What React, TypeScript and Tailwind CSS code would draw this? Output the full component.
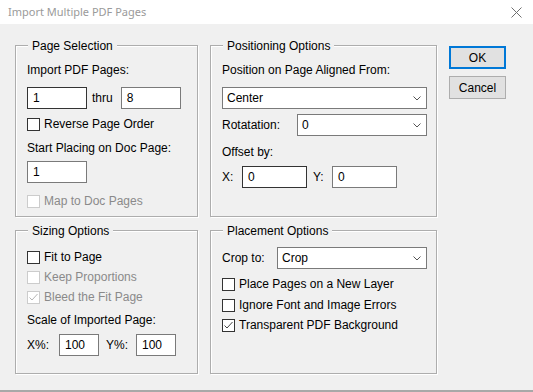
import React from "react";

const font = { fontFamily: '"Liberation Sans", Arial, sans-serif' };

function Group({ title, className, children }: { title: string; className: string; children: React.ReactNode }) {
  return (
    <div className={"relative border border-[#adadad] shadow-[inset_1px_1px_0_#ffffff,1px_1px_0_#ffffff] pl-[11px] pr-[9px] " + className}>
      <span className="absolute left-[12px] top-[-7px] bg-[#f0f0f0] px-[4px] leading-[14px] text-[12px] text-black">{title}</span>
      {children}
    </div>
  );
}

function Input({ value, w, dark }: { value: string; w: string; dark?: boolean }) {
  return (
    <div className={"h-[22px] bg-white border flex items-center pl-[5px] text-[12px] text-black " + w + (dark ? " border-[#333333]" : " border-[#7a7a7a]")}>
      {value}
    </div>
  );
}

function Select({ value, w }: { value: string; w: string }) {
  return (
    <div className={"h-[22px] bg-white border border-[#7a7a7a] flex items-center justify-between pl-[4px] pr-[4px] text-[12px] text-black " + w}>
      <span>{value}</span>
      <svg width="8" height="5" viewBox="0 0 8 5" className="mr-[1px]">
        <path d="M0.5 0.5 L4 4 L7.5 0.5" fill="none" stroke="#555" strokeWidth="1" />
      </svg>
    </div>
  );
}

function Check({ label, disabled, checked, className }: { label: string; disabled?: boolean; checked?: boolean; className?: string }) {
  return (
    <div className={"flex items-center h-[16px] text-[12px] " + (disabled ? "text-[#8a8a8a] " : "text-black ") + (className || "")}>
      <div className={"w-[13px] h-[13px] bg-white border flex items-center justify-center " + (disabled ? "border-[#cccccc]" : "border-[#333333]")}>
        {checked && (
          <svg width="11" height="11" viewBox="0 0 11 11">
            <path d="M1.5 5.5 L4 8 L9.5 2" fill="none" stroke={disabled ? "#b5b5b5" : "#444"} strokeWidth="1" />
          </svg>
        )}
      </div>
      <span className="ml-[4px]">{label}</span>
    </div>
  );
}

function Label({ children, className }: { children: React.ReactNode; className?: string }) {
  return <div className={"h-[16px] leading-[16px] text-[12px] text-black " + (className || "")}>{children}</div>;
}

export default function App() {
  return (
    <div className="w-[533px] h-[392px] bg-[#f0f0f0] flex flex-col overflow-hidden" style={font}>
      <div className="h-[24px] bg-white flex items-center justify-between pl-[8px] pr-[11px] shrink-0">
        <span className="text-[11px] text-[#9a9a9a]" style={{ fontFamily: '"Noto Sans", "Open Sans", sans-serif' }}>Import Multiple PDF Pages</span>
        <svg width="11" height="11" viewBox="0 0 11 11">
          <path d="M0.5 0.5 L10.5 10.5 M10.5 0.5 L0.5 10.5" stroke="#6f6f6f" strokeWidth="1" />
        </svg>
      </div>
      <div className="flex-1 flex pl-[15px] pt-[21px] border-b-2 border-[#a8a8a8]">
        <div className="flex flex-col w-[183px]">
          <Group title="Page Selection" className="h-[172px] pt-[16px]">
            <Label>Import PDF Pages:</Label>
            <div className="flex items-center mt-[9px]">
              <Input value="1" w="w-[60px]" dark />
              <span className="ml-[5px] text-[12px] text-black">thru</span>
              <div className="ml-[8px]">
                <Input value="8" w="w-[60px]" />
              </div>
            </div>
            <Check label="Reverse Page Order" className="mt-[7px]" />
            <Label className="mt-[8px]">Start Placing on Doc Page:</Label>
            <div className="mt-[5px]">
              <Input value="1" w="w-[60px]" />
            </div>
            <Check label="Map to Doc Pages" disabled className="mt-[10px]" />
          </Group>
          <Group title="Sizing Options" className="h-[144px] mt-[13px] pt-[18px]">
            <Check label="Fit to Page" />
            <Check label="Keep Proportions" disabled className="mt-[4px]" />
            <Check label="Bleed the Fit Page" disabled checked className="mt-[4px]" />
            <Label className="mt-[7px]">Scale of Imported Page:</Label>
            <div className="flex items-center mt-[6px] text-[12px] text-black">
              <span className="w-[32px]">X%:</span>
              <Input value="100" w="w-[40px]" />
              <span className="ml-[7px] w-[30px]">Y%:</span>
              <Input value="100" w="w-[40px]" />
            </div>
          </Group>
        </div>
        <div className="flex flex-col w-[227px] ml-[12px]">
          <Group title="Positioning Options" className="h-[172px] pt-[16px]">
            <Label>Position on Page Aligned From:</Label>
            <div className="mt-[9px]">
              <Select value="Center" w="w-[205px]" />
            </div>
            <div className="flex items-center justify-between mt-[5px] w-[205px]">
              <span className="text-[12px] text-black">Rotatation:</span>
              <Select value="0" w="w-[130px]" />
            </div>
            <Label className="mt-[8px]">Offset by:</Label>
            <div className="flex items-center mt-[6px] text-[12px] text-black">
              <span className="w-[20px]">X:</span>
              <Input value="0" w="w-[65px]" dark />
              <span className="ml-[6px] w-[19px]">Y:</span>
              <Input value="0" w="w-[65px]" />
            </div>
          </Group>
          <Group title="Placement Options" className="h-[144px] mt-[13px] pt-[16px]">
            <div className="flex items-center justify-between w-[205px]">
              <span className="text-[12px] text-black">Crop to:</span>
              <Select value="Crop" w="w-[150px]" />
            </div>
            <Check label="Place Pages on a New Layer" className="mt-[7px]" />
            <Check label="Ignore Font and Image Errors" className="mt-[5px]" />
            <Check label="Transparent PDF Background" checked className="mt-[4px]" />
          </Group>
        </div>
        <div className="flex flex-col ml-[12px] mt-[1px]">
          <div className="w-[57px] h-[23px] bg-[#e1e1e1] border-2 border-[#0078d7] flex items-center justify-center text-[12px] text-black">OK</div>
          <div className="w-[57px] h-[23px] mt-[7px] bg-[#e1e1e1] border border-[#adadad] flex items-center justify-center text-[12px] text-black">Cancel</div>
        </div>
      </div>
    </div>
  );
}
